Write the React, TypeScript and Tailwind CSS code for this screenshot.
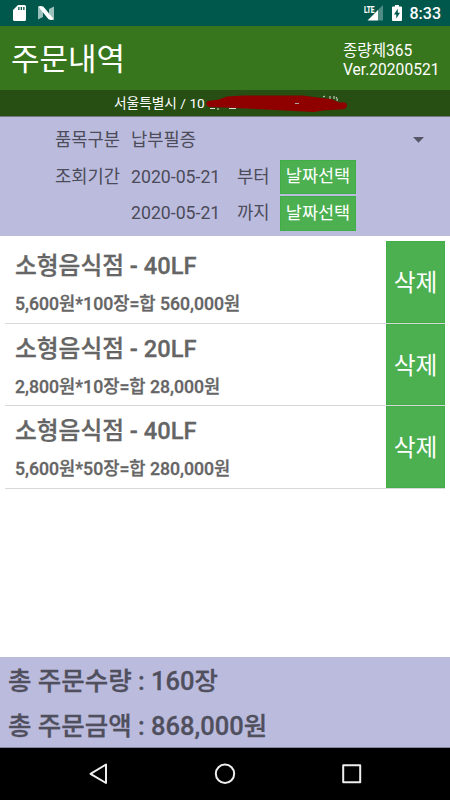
import { ReactNode } from "react";

interface OrderItem {
  id: number;
  name: string;
  detail: string;
}

const orders: OrderItem[] = [
  { id: 1, name: "소형음식점 - 40LF", detail: "5,600원*100장=합 560,000원" },
  { id: 2, name: "소형음식점 - 20LF", detail: "2,800원*10장=합 28,000원" },
  { id: 3, name: "소형음식점 - 40LF", detail: "5,600원*50장=합 280,000원" },
];

function StatusBar() {
  return (
    <div className="h-[26px] shrink-0 bg-[#00574b] flex items-center justify-between pl-[13px] pr-[9px]">
      <div className="flex items-center gap-[12px]">
        <svg width="13" height="16" viewBox="0 0 13 16">
          <path
            fill="#fff"
            fillRule="evenodd"
            d="M5 0h6.500Q13 0 13 1.500v13Q13 16 11.500 16h-10Q0 16 0 14.500V5zM5.200 2v3h1.300V2zM7.700 2v3H9V2zM10.200 2v3h1.300V2z"
          />
        </svg>
        <svg width="16" height="14" viewBox="0 0 16 14">
          <path fill="#9cc0bb" d="M0 0.500L5 3V11L0 13.500zM11 3L16 0.500V13.500L11 11z" />
          <path fill="#fff" d="M0.200 0.500Q3 -0.400 5.500 0.800L16 13.500Q13 14.400 10.500 13.200z" />
        </svg>
      </div>
      <div className="flex items-center">
        <svg width="19" height="16" viewBox="0 0 19 16" className="mr-[9px]">
          <path fill="#4f8c83" d="M19 0v15.500H14V5z" />
          <path fill="#fff" d="M14 5v10.500H3.500z" />
          <text
            x="0"
            y="7.500"
            fill="#fff"
            stroke="#fff"
            strokeWidth="0.200"
            fontSize="9"
            fontWeight="700"
            textLength="10.500"
            lengthAdjust="spacingAndGlyphs"
          >
            LTE
          </text>
        </svg>
        <svg width="10" height="16" viewBox="0 0 10 16" className="mr-[7.500px]">
          <path
            fill="#fff"
            fillRule="evenodd"
            d="M3 0h4v1.500h2q1 0 1 1V15q0 1-1 1H1q-1 0-1-1V2.500q0-1 1-1h2zM5.800 3.800L2 9.500h2.300v4L8 7.800H5.800z"
          />
        </svg>
        <span className="text-[16px] font-medium leading-none text-white pt-[2px]">8:33</span>
      </div>
    </div>
  );
}

function Header() {
  return (
    <header className="h-16 shrink-0 bg-[#38761d] flex items-center justify-between pl-[11px] pr-[11px] text-white">
      <h1 className="text-[31px] leading-none pt-[2px]">주문내역</h1>
      <div className="w-[96px] text-[15.600px] leading-[19px] pt-[5px]">
        <div>종량제365</div>
        <div>Ver.20200521</div>
      </div>
    </header>
  );
}

function AddressBar() {
  return (
    <div className="h-[26px] shrink-0 bg-[#274e13] flex items-center pl-[114px] text-[13.700px] leading-none text-white">
      <span className="w-[91px] pt-[2px]">서울특별시 / 10</span>
      {/* 상세 주소 가림 */}
      <svg width="144" height="20" viewBox="0 0 144 20" className="-ml-px">
        <path stroke="#ddd" strokeWidth="1" d="M6 15.500h5M14 15v2M25 15.500h7M119 4l2-1M126 3v3M130 3v3M132 4q2 2 1 4" fill="none" />
        <path
          fill="#8f0000"
          d="M4 8L15 6.500L23 3.500L39 2.500H99L113 4.500L127 6L135 9.500Q143 8 143 12.500T135 16.500L119 17.500L110 19L90 18L62 16.500L20 14.500L5 14Q0 11 4 8z"
        />
        <path stroke="#aaa" d="M91 10.500h4" />
      </svg>
    </div>
  );
}

function DateButton() {
  return (
    <button className="w-[76px] h-[34.500px] bg-[#4caf50] border border-[#3fae44] text-white text-[17.500px] leading-none">
      날짜선택
    </button>
  );
}

function FilterRow({ label, value, children }: { label: string; value: string; children?: ReactNode }) {
  return (
    <div className="flex items-center h-[36.500px]">
      <span className="w-[76px] pt-[2px]">{label}</span>
      <span className="w-[106px] pt-[2px]">{value}</span>
      {children}
    </div>
  );
}

function Filters() {
  return (
    <section className="h-[120px] shrink-0 bg-[#bbbbde] border-t border-[#74777f] pl-[55px] pt-[5px] text-[17.700px] leading-none text-[#4b4b59]">
      <FilterRow label="품목구분" value="납부필증">
        <svg width="11" height="6" viewBox="0 0 11 6" className="ml-auto mr-[26px]">
          <path fill="#555565" d="M0 0h11L5.500 5.800z" />
        </svg>
      </FilterRow>
      <FilterRow label="조회기간" value="2020-05-21">
        <span className="w-[43px] pt-[2px]">부터</span>
        <DateButton />
      </FilterRow>
      <FilterRow label="" value="2020-05-21">
        <span className="w-[43px] pt-[2px]">까지</span>
        <DateButton />
      </FilterRow>
    </section>
  );
}

function OrderRow({ order }: { order: OrderItem }) {
  return (
    <li className="h-[82.500px] flex border-b border-[#d8d8d8]">
      <div className="flex-1 pl-[10px] pt-[11px] font-medium text-[#656565] [-webkit-text-stroke:0.3px_#656565]">
        <div className="text-[23.700px] leading-[28px]">{order.name}</div>
        <div className="mt-[13px] text-[17.650px] leading-[22px]">{order.detail}</div>
      </div>
      <button className="w-[59px] bg-[#4caf50] border border-[#43ae48] text-white text-[23.750px] leading-none pt-[5px]">
        삭제
      </button>
    </li>
  );
}

export default function App() {
  return (
    <div className="w-full h-screen flex flex-col bg-white overflow-hidden whitespace-nowrap font-[Roboto,'Noto_Sans_CJK_KR',sans-serif]">
      <StatusBar />
      <Header />
      <AddressBar />
      <Filters />

      <ul className="flex-1 px-[5px] pt-[5px]">
        {orders.map((order) => (
          <OrderRow key={order.id} order={order} />
        ))}
      </ul>

      <footer className="h-[91px] shrink-0 bg-[#bbbbde] border-b border-[#85859e] pl-2 font-medium text-[25.500px] text-[#4f4f5d] [-webkit-text-stroke:0.3px_#4f4f5d]">
        <div className="h-[45px] leading-[48px]">총 주문수량 : 160장</div>
        <div className="h-[45px] leading-[48px]">총 주문금액 : 868,000원</div>
      </footer>

      <nav className="h-[52px] shrink-0 bg-black">
        <svg width="450" height="52" viewBox="0 0 450 52" fill="none" stroke="#eee" strokeWidth="2" strokeLinejoin="round">
          <path d="M106 16.500V35L90.500 25.800z" />
          <circle cx="225" cy="25.700" r="9.200" />
          <rect x="343.200" y="17.200" width="17" height="17" />
        </svg>
      </nav>
    </div>
  );
}
